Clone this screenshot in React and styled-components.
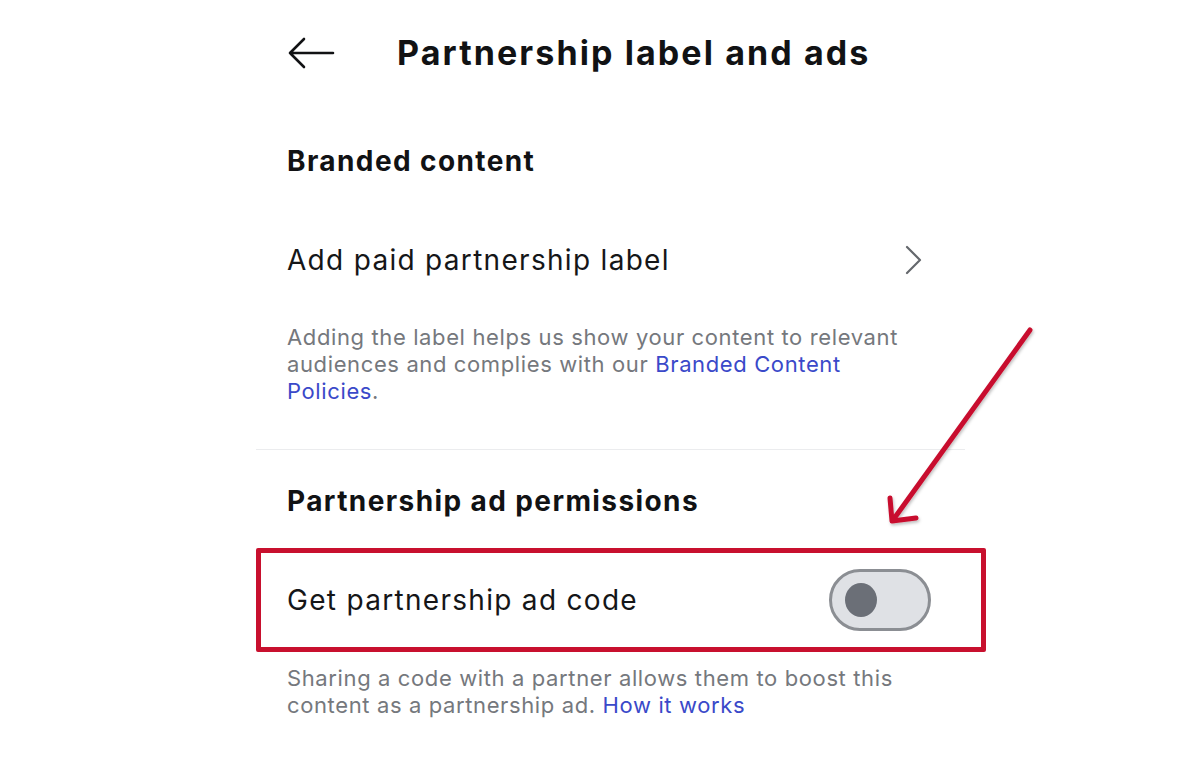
import React from "react";
import styled, { createGlobalStyle } from "styled-components";

const GlobalStyle = createGlobalStyle`
  html, body {
    margin: 0;
    padding: 0;
    background: #ffffff;
  }
  body {
    font-family: "Inter", "Roboto", "Liberation Sans", sans-serif;
    color: #1c1e21;
  }
`;

const Page = styled.div`
  position: relative;
  width: 1200px;
  height: 771px;
  overflow: hidden;
  background: #ffffff;
`;

const Column = styled.div`
  margin-left: 256px;
  width: 730px;
  display: flex;
  flex-direction: column;
`;

const Header = styled.div`
  height: 106px;
  display: flex;
  align-items: center;
  padding-left: 31px;
  gap: 62px;
`;

const BackButton = styled.button`
  border: 0;
  background: none;
  padding: 0;
  display: flex;
  align-items: center;
  cursor: pointer;
`;

const Title = styled.h1`
  margin: 0;
  font-size: 34px;
  font-weight: 700;
  line-height: 40px;
  letter-spacing: 2.1px;
  color: #111214;
`;

const SectionTitle = styled.h2`
  margin: 0;
  padding: ${(p) => (p.$tight ? "34px 31px 30px" : "38px 31px 38px")};
  font-size: 28px;
  font-weight: 700;
  line-height: 34px;
  letter-spacing: 1.4px;
  color: #111214;
`;

const NavRow = styled.div`
  height: 88px;
  display: flex;
  align-items: center;
  justify-content: space-between;
  padding: 0 64px 0 31px;
`;

const RowLabel = styled.span`
  font-size: 28px;
  font-weight: 400;
  letter-spacing: 1.3px;
  color: #151618;
`;

const Description = styled.p`
  margin: 0;
  padding: ${(p) => p.$padding};
  width: 628px;
  font-size: 22px;
  line-height: 27px;
  letter-spacing: 0.62px;
  color: #75787d;
`;

const Link = styled.a`
  color: #3a49c9;
  text-decoration: none;
`;

const Divider = styled.hr`
  margin: 0;
  border: 0;
  height: 1px;
  width: 709px;
  background: #ebecee;
`;

const HighlightRow = styled.div`
  height: 94px;
  border: 5px solid #c8102e;
  border-radius: 2px;
  display: flex;
  align-items: center;
  justify-content: space-between;
  padding: 0 50px 0 26px;
`;

const Toggle = styled.div`
  width: 102px;
  height: 62px;
  box-sizing: border-box;
  border-radius: 31px;
  border: 3px solid #8b8e93;
  background: #dfe1e5;
  display: flex;
  align-items: center;
  padding-left: 13px;
`;

const Knob = styled.span`
  width: 32px;
  height: 34px;
  border-radius: 50%;
  background: #6b6f77;
`;

const Annotation = styled.svg`
  position: absolute;
  left: 0;
  top: 0;
  pointer-events: none;
`;

const BackIcon = () => (
  <svg width="48" height="34" viewBox="0 0 48 34" fill="none">
    <path
      d="M46 17H3M17 3L3 17l14 14"
      stroke="#111214"
      strokeWidth="2.6"
      strokeLinecap="round"
      strokeLinejoin="round"
    />
  </svg>
);

const ChevronIcon = () => (
  <svg width="18" height="30" viewBox="0 0 18 30" fill="none">
    <path
      d="M3 2l13 13L3 28"
      stroke="#65686d"
      strokeWidth="2.2"
      strokeLinecap="round"
      strokeLinejoin="round"
    />
  </svg>
);

export default function App() {
  return (
    <Page>
      <GlobalStyle />
      <Column>
        <Header>
          <BackButton aria-label="Back">
            <BackIcon />
          </BackButton>
          <Title>Partnership label and ads</Title>
        </Header>

        <SectionTitle>Branded content</SectionTitle>
        <NavRow>
          <RowLabel>Add paid partnership label</RowLabel>
          <ChevronIcon />
        </NavRow>
        <Description $padding="20px 31px 44px">
          Adding the label helps us show your content to relevant audiences
          and complies with our <Link href="#">Branded Content Policies</Link>.
        </Description>
        <Divider />

        <SectionTitle $tight>Partnership ad permissions</SectionTitle>
        <HighlightRow>
          <RowLabel>Get partnership ad code</RowLabel>
          <Toggle>
            <Knob />
          </Toggle>
        </HighlightRow>
        <Description $padding="13px 31px 0">
          Sharing a code with a partner allows them to boost this content as a
          partnership ad. <Link href="#">How it works</Link>
        </Description>
      </Column>

      <Annotation width="1200" height="771">
        <defs>
          <filter id="shadow" x="-20%" y="-20%" width="140%" height="140%">
            <feDropShadow dx="1" dy="2" stdDeviation="1.5" floodColor="#000" floodOpacity="0.25" />
          </filter>
        </defs>
        <g
          stroke="#c8102e"
          strokeWidth="5"
          strokeLinecap="round"
          strokeLinejoin="round"
          fill="none"
          filter="url(#shadow)"
        >
          <path d="M1030 330L893 520" />
          <path d="M890 498L892 521L916 518" />
        </g>
      </Annotation>
    </Page>
  );
}
